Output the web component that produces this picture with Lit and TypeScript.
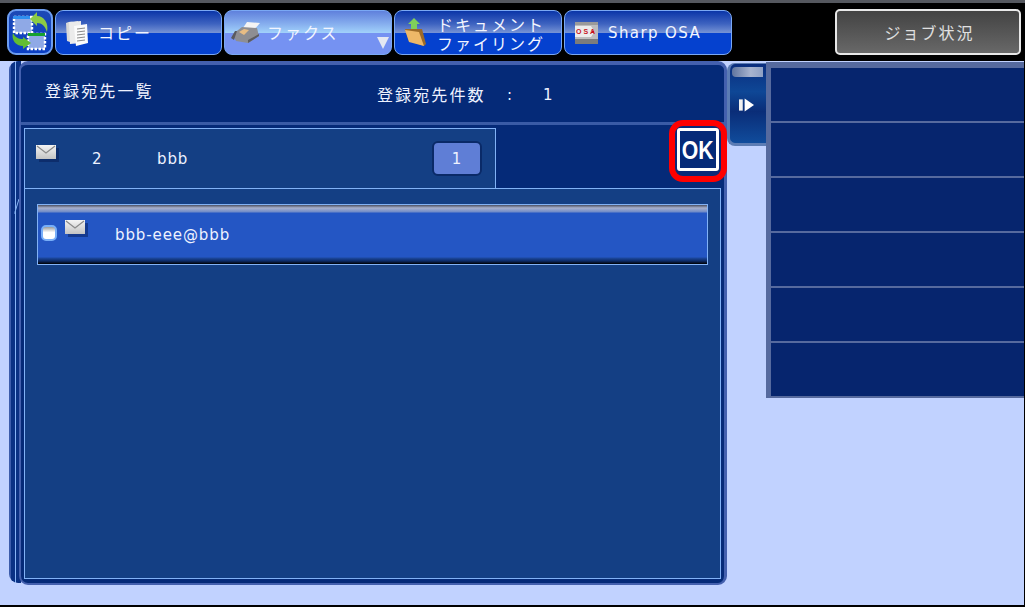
import { LitElement, html, css, svg } from "lit";
import { customElement } from "lit/decorators.js";

const envelope = html`<svg class="env" width="24" height="18" viewBox="0 0 24 18">
  <defs><linearGradient id="eg" x1="0" y1="0" x2="0" y2="1"><stop offset="0" stop-color="#f4f4f4"/><stop offset="1" stop-color="#c4c4c4"/></linearGradient></defs>
  <rect x="3" y="3" width="20" height="14" fill="#04194f" opacity=".45"/>
  <rect x="0" y="0" width="20" height="14" fill="url(#eg)"/>
  <path d="M1 1 L10 8 L19 1" fill="none" stroke="#8a8a8a" stroke-width="1.2"/>
</svg>`;

const switchIcon = html`<svg width="42" height="42" viewBox="0 0 42 42">
  <rect x="5" y="6" width="18" height="16" fill="#8fa9e6" stroke="#fff" stroke-width="2.4" stroke-dasharray="2.5 1.5"/>
  <rect x="19" y="23" width="17" height="15" fill="#8fa9e6" stroke="#fff" stroke-width="2.4" stroke-dasharray="2.5 1.5"/>
  <rect x="4" y="5" width="17" height="3" fill="#2f8ff0"/>
  <rect x="19" y="22" width="17" height="3" fill="#14a030"/>
  <path d="M21 8 L28 1 L28 5 C35 5 40 12 38 21 C36 15 33 12 28 12 L28 15Z" fill="#8ccb45"/>
  <path d="M22 32 L14 38 L14 35 C7 35 2 29 4 22 C6 26 9 28 14 28 L14 26Z" fill="#62bd32"/>
</svg>`;

const copyIcon = html`<svg width="24" height="28" viewBox="0 0 24 28">
  <path d="M1 4 Q5 2 9 3 L13 2 L13 23 Q6 24 2 22Z" fill="#d8d8d8"/>
  <path d="M4 3 L16 2 L16 24 L5 25Z" fill="#ebebeb"/>
  <path d="M9 7 L22 5 L23 24 L11 27Z" fill="#fbfbfb"/>
  <path d="M12 10 L20 9 M12 13 L20 12 M12 16 L20 15 M12 19 L20 18 M12 22 L20 21" stroke="#8a8a8a" stroke-width="1"/>
</svg>`;

const faxIcon = html`<svg width="32" height="22" viewBox="0 0 32 22">
  <path d="M13 6 L17 0 L30 1 L24 8Z" fill="#f4f4f4"/>
  <path d="M3 12 L12 5 L27 6 L29 14 L18 21 L6 19Z" fill="#8e8e92"/>
  <path d="M9 10 L14 7 L19 8 L14 13Z" fill="#e8bd84"/>
  <path d="M1 16 L5 9 L7 9 L4 18Z" fill="#5a5a5e"/>
  <path d="M18 21 L29 14 L29 12 L18 18Z" fill="#5c5c60"/>
</svg>`;

const folderIcon = html`<svg width="24" height="30" viewBox="0 0 24 30">
  <path d="M10 0 L16 6 L13 6 L13 13 L7 13 L7 6 L4 6Z" fill="#7fd05a"/>
  <path d="M1 11 L18 11 L22 26 L20 28 L5 23Z" fill="#9c6a28"/>
  <path d="M1 12 L15 14 L20 28 L5 24Z" fill="#eeb868"/>
</svg>`;

const osaIcon = html`<svg width="23" height="22" viewBox="0 0 23 22">
  <rect width="23" height="22" fill="#bdbdbd"/>
  <rect y="0" width="23" height="3" fill="#9a9a9a"/>
  <path d="M0 4 H16 Q21 10 16 15 H0Z" fill="#ececec"/>
  <text x="1" y="12" font-family="Liberation Sans, sans-serif" font-size="7" font-weight="bold" fill="#c8141e">OSA</text>
  <rect x="17" y="9" width="2" height="2" fill="#c8141e"/>
  <rect x="0" y="17" width="23" height="5" fill="#7c7c7c"/>
</svg>`;

@customElement("app-root")
export class AppRoot extends LitElement {
  static styles = css`
    :host { display: block; width: 1025px; height: 607px; overflow: hidden; background: #000;
      font-family: "DejaVu Sans", "Noto Sans CJK JP", sans-serif; color: #eef2ff; }
    .strip { height: 3px; background: #55585f; }
    .topbar { height: 58px; box-sizing: border-box; background: #000; display: flex; align-items: flex-start; padding: 6px 4px 0 7px; gap: 2px; }
    .home { width: 46px; height: 46px; box-sizing: border-box; border: 2px solid #6d9df0; border-radius: 9px; display: flex; align-items: center; justify-content: center;
      background: linear-gradient(#1c49b5, #0a3ec4); }
    .btn { width: 168px; height: 45px; margin-top: 1px; box-sizing: border-box; border: 1px solid #7aa8f4; border-radius: 8px; display: flex; align-items: center; position: relative;
      background: linear-gradient(#0a35a8 0%, #3e63c0 30%, #7491d4 50%, #0541cf 51%, #0541cf 100%);
      font-size: 16px; letter-spacing: 2px; color: #f2f5ff; white-space: nowrap; }
    .btn.copy { width: 167px; }
    .btn.sel { background: linear-gradient(#5f80dc 0%, #86aeee 30%, #a0d0fa 50%, #7592f2 51%, #7592f2 100%); }
    .btn .ic { width: 42px; flex: none; display: flex; justify-content: center; }
    .copy-label { margin-top: -1px; }
    .two { line-height: 19px; text-align: center; width: 110px; margin-top: 5px; margin-left: -1px; }
    .latin { font-size: 15px; letter-spacing: 1.4px; margin-left: 1px; }
    .tri { position: absolute; right: 2px; bottom: 5px; width: 0; height: 0; border-left: 6px solid transparent; border-right: 6px solid transparent; border-top: 12px solid #e4e8f2; }
    .spacer { flex: 1; }
    .job { width: 186px; height: 46px; box-sizing: border-box; border: 2px solid #e8e8e8; border-radius: 5px; background: linear-gradient(#434343, #686868); padding-left: 3px;
      display: flex; align-items: center; justify-content: center; font-size: 16px; letter-spacing: 2px; color: #e0e0e0; }

    .main { height: 544px; background: #c1d2ff; display: flex; align-items: flex-start; padding-left: 9px; margin-right: 1px; }
    .back { width: 718px; height: 522px; box-sizing: border-box; padding-left: 6px; position: relative; flex: none;
      background: linear-gradient(90deg, #3c5cab 0 2px, #0a3184 2px 6px, #88b4f4 6px 7px, #0a3184 7px 12px, transparent 12px); border-radius: 9px 0 0 9px; }
    .front { width: 708px; height: 524px; margin-left: 4px; box-sizing: border-box; border: 2px solid #4460ae; border-top-width: 4px; border-right-width: 3px; border-radius: 9px; background: #052a78;
      display: flex; flex-direction: column; position: relative; }
    .head { height: 60px; box-sizing: border-box; border-bottom: 3px solid #3a5ba6; display: flex; align-items: flex-start; flex: none; font-size: 16px; letter-spacing: 2.1px; }
    .title { margin-left: 24px; margin-top: 13px; width: 332px; flex: none; }
    .count { margin-top: 17px; width: 130px; flex: none; }
    .colon { margin-top: 21px; width: 36px; flex: none; font-size: 15px; }
    .num { margin-top: 21px; font-size: 15px; }
    .body { flex: 1; display: flex; flex-direction: column; padding: 3px 3px 4px 3px; }
    .tab { width: 472px; height: 60px; flex: none; box-sizing: border-box; border: 1px solid #82b2f6; border-bottom: none; background: #143f84; display: flex; align-items: center; font-size: 15px; letter-spacing: 0.9px; }
    .tab .env { margin-left: 11px; margin-top: -10px; flex: none; }
    .tab .idx { margin-left: 32px; width: 65px; flex: none; }
    .tab .name { flex: 1; }
    .badge { width: 50px; height: 35px; box-sizing: border-box; margin-right: 13px; margin-top: -1px; padding-top: 2px; border: 2px solid #0a2a68; border-radius: 6px; background: #5f7ed6; display: flex; align-items: center; justify-content: center; }
    .list { flex: 1; box-sizing: border-box; border: 1px solid #82b2f6; background: #143f84; padding: 15px 12px; }
    .row { height: 61px; box-sizing: border-box; border: 1px solid #82b2f6; display: flex; align-items: center; font-size: 15px; letter-spacing: 0.9px;
      background: linear-gradient(#4a4f62 0, #a8b0cc 3px, #6f8ac8 7px, #2456c4 8px, #2456c4 52px, #1c489e 53px, #0c2a66 56px, #000 59px); }
    .cb { width: 16px; height: 16px; box-sizing: border-box; margin-left: 3px; flex: none; margin-top: -4px; border: 2px solid #78aef8; border-radius: 5px; background: linear-gradient(#9a9a9a 0, #e0e0e0 30%, #fff 45%); }
    .row .env { margin-left: 8px; margin-top: -12px; flex: none; }
    .row .addr { margin-left: 26px; }
    .ok { position: absolute; right: -3px; top: 55px; width: 58px; height: 62px; box-sizing: border-box; border: 6px solid #f00; border-radius: 14px; background: #0a2a78; padding: 2px 2px 5px 2px; z-index: 2; }
    .ok span { display: flex; width: 100%; height: 100%; box-sizing: border-box; border: 3px solid #fff; border-radius: 3px; background: #052a78; align-items: center; justify-content: center; }
    .ok b { display: block; margin-top: 1px; transform: scaleX(.85); font-family: "Liberation Sans", sans-serif; font-weight: bold; font-size: 25px; color: #fff; }
    .slash { position: absolute; left: 5px; top: 137px; }

    .handle { width: 39px; height: 83px; margin-top: 2px; flex: none; box-sizing: border-box; border-left: 3px solid #5c7cb4; border-bottom: 3px solid #5c7cb4; border-top: 1px solid #5c7cb4; border-radius: 8px 0 0 8px;
      background: linear-gradient(#0a2d7e 0, #0e4796 35%, #0a2d78 60%, #104c9c 100%); display: flex; flex-direction: column; align-items: flex-end; }
    .pill { width: 31px; height: 10px; margin-top: 3px; margin-right: 3px; border-radius: 4px 0 0 4px; background: linear-gradient(90deg, #60759f, #a8b4cf 60%, #8ea0c4); }
    .handle svg { margin-top: 21px; margin-right: 12px; }
    .side { flex: 1; margin-top: 1px; box-sizing: border-box; border-left: 5px solid #566a9e; border-top: 6px solid #566a9e; border-bottom: 2px solid #566a9e; background: #06256e; }
    .side div { height: 55px; box-sizing: border-box; border-bottom: 2px solid #566a9e; }
    .side div:last-child { border-bottom: none; height: 53px; }
    .foot { height: 2px; background: #000; }
  `;

  render() {
    return html`
      <div class="strip"></div>
      <div class="topbar">
        <div class="home">${switchIcon}</div>
        <div class="btn copy"><span class="ic">${copyIcon}</span><span class="copy-label">コピー</span></div>
        <div class="btn sel"><span class="ic">${faxIcon}</span><span class="copy-label">ファクス</span><i class="tri"></i></div>
        <div class="btn"><span class="ic">${folderIcon}</span><span class="two">ドキュメント<br />ファイリング</span></div>
        <div class="btn"><span class="ic">${osaIcon}</span><span class="latin">Sharp OSA</span></div>
        <div class="spacer"></div>
        <div class="job">ジョブ状況</div>
      </div>
      <div class="main">
        <div class="back">
          <svg class="slash" width="6" height="16" viewBox="0 0 6 16">${svg`<path d="M5 1 L1 14 L1 16" fill="none" stroke="#88b4f4" stroke-width="1"/>`}</svg>
          <div class="front">
            <div class="head">
              <span class="title">登録宛先一覧</span>
              <span class="count">登録宛先件数</span>
              <span class="colon">:</span>
              <span class="num">1</span>
            </div>
            <div class="body">
              <div class="tab">
                ${envelope}
                <span class="idx">2</span>
                <span class="name">bbb</span>
                <span class="badge">1</span>
              </div>
              <div class="list">
                <div class="row">
                  <span class="cb"></span>
                  ${envelope}
                  <span class="addr">bbb-eee@bbb</span>
                </div>
              </div>
            </div>
            <div class="ok"><span><b>OK</b></span></div>
          </div>
        </div>
        <div class="handle">
          <div class="pill"></div>
          <svg width="15" height="14" viewBox="0 0 16 14"><rect x="0" y="1" width="4" height="12" fill="#f0f0f0"/><path d="M6 0 L16 7 L6 14Z" fill="#fff"/></svg>
        </div>
        <div class="side"><div></div><div></div><div></div><div></div><div></div><div></div></div>
      </div>
      <div class="foot"></div>
    `;
  }
}
